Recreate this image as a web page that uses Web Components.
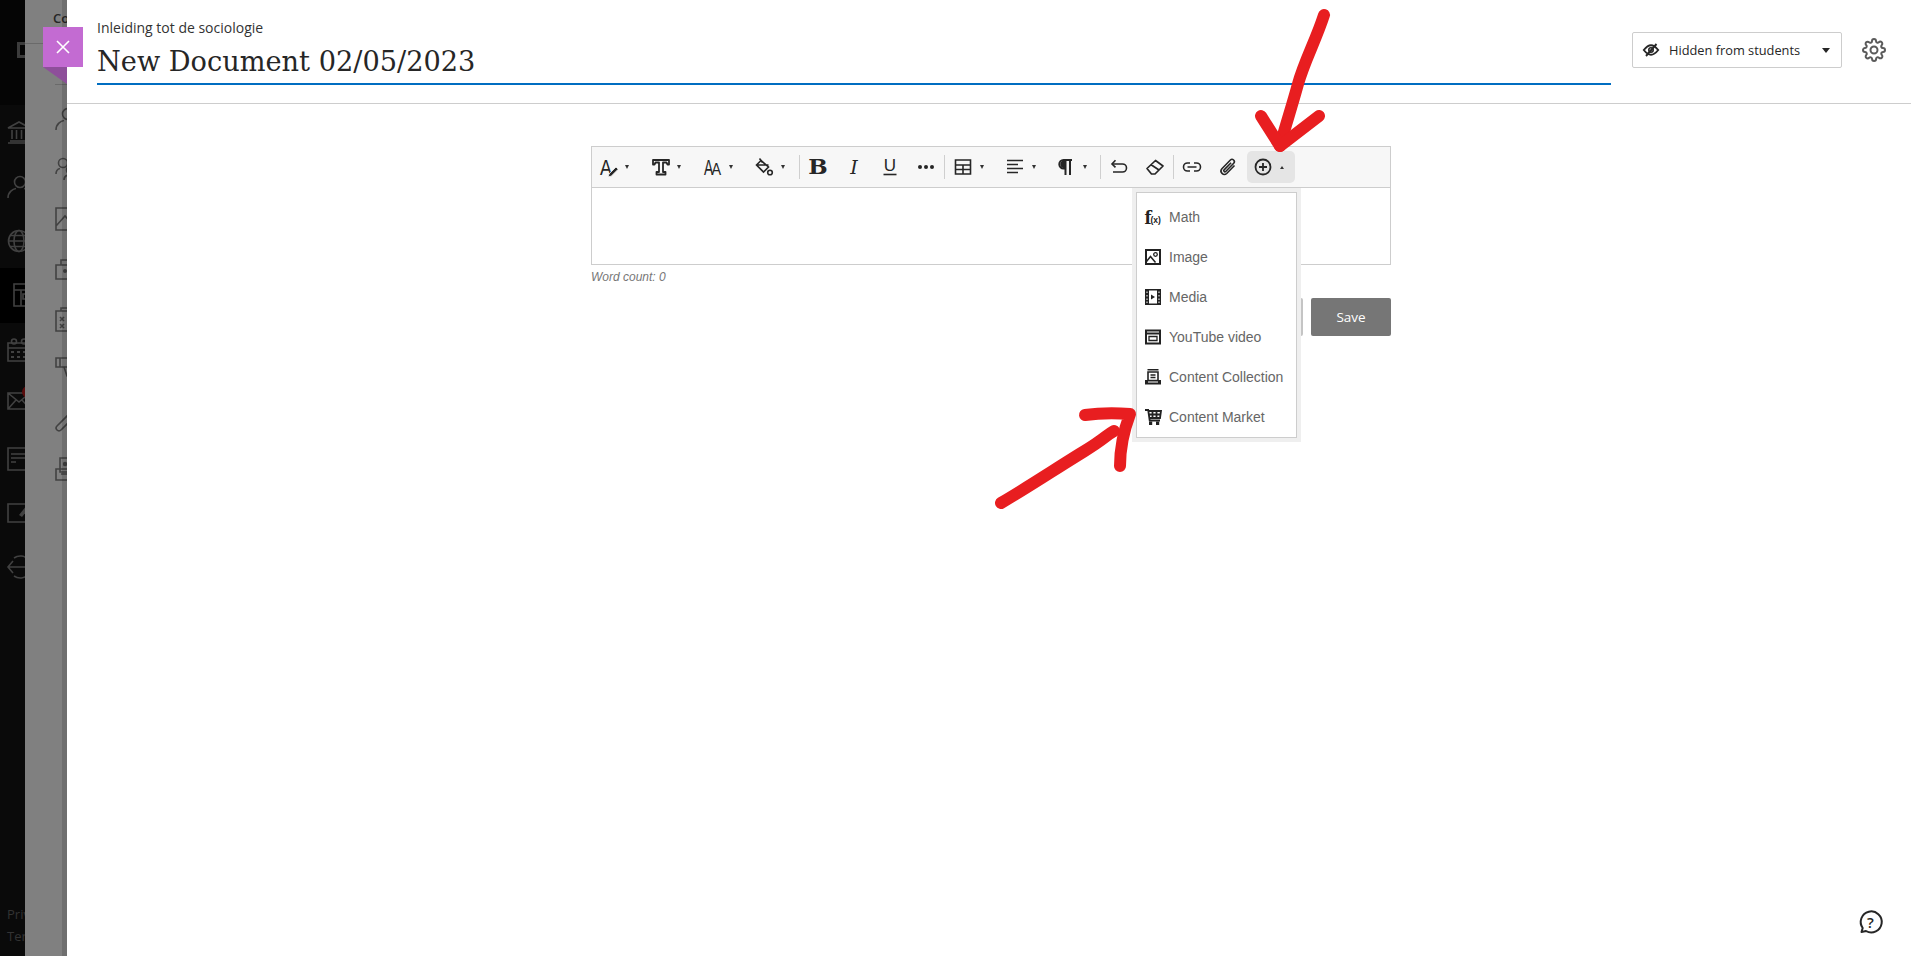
<!DOCTYPE html>
<html>
<head>
<meta charset="utf-8">
<title>New Document</title>
<style>
  html, body { margin: 0; height: 100%; overflow: hidden; background: #fff; }
</style>
</head>
<body>
<bb-app>
  <dim-rail slot="rail"></dim-rail>
  <dim-coursenav slot="nav"></dim-coursenav>
  <doc-panel slot="panel">
    <doc-header course="Inleiding tot de sociologie" title="New Document 02/05/2023"></doc-header>
    <rich-editor></rich-editor>
  </doc-panel>
</bb-app>

<script>
const line = 'fill="none" stroke="currentColor" stroke-width="1.6"';
const slab = 'font-family="DejaVu Serif"';
const ICONS = {
    // toolbar
    fontcolor: `<text transform="translate(2 18) scale(.8 1)" font-family="Liberation Sans" font-size="22" fill="currentColor">A</text><path d="M11 17l7-7 2.200 2.200-7 7-3 .6z" fill="currentColor" stroke="#f7f7f7" stroke-width=".8"/>`,
    fontfamily: `<path d="M3 3h16v4.500h-1.500l-1-2H13v9.500h2.500v2.500h-9V15H9V5.500H5.500l-1 2H3z" fill="#f7f7f7" stroke="currentColor" stroke-width="1.800" stroke-linejoin="round"/>`,
    fontsize: `<text transform="translate(2 18) scale(.62 1)" font-family="Liberation Sans" font-size="22" fill="currentColor">A</text><text transform="translate(9.500 18) scale(.85 1)" font-family="Liberation Sans" font-size="17" fill="currentColor">A</text>`,
    bucket: `<path d="M7 3.500l7.500 6.500-5 5-7-7z M2.500 8h12" ${line}/><path d="M5.500 1.500l3 4" ${line}/><circle cx="16" cy="15.500" r="2.300" ${line}/>`,
    bold: `<text transform="translate(10 16.500) scale(1.150 1)" text-anchor="middle" ${slab} font-weight="700" font-size="20" fill="currentColor">B</text>`,
    italic: `<text x="10" y="16.500" text-anchor="middle" ${slab} font-style="italic" font-size="19" fill="currentColor">I</text>`,
    underline: `<text x="10" y="14" text-anchor="middle" font-family="Liberation Sans" font-size="17" fill="currentColor">U</text><path d="M3.500 17.500h13" ${line}/>`,
    dots: `<circle cx="4" cy="10" r="2" fill="currentColor"/><circle cx="10" cy="10" r="2" fill="currentColor"/><circle cx="16" cy="10" r="2" fill="currentColor"/>`,
    table: `<path d="M2.500 3h15v14h-15z M2.500 8h15 M2.500 12.500h15 M10 8v9" ${line}/>`,
    align: `<path d="M2 3.500h16 M2 7.500h11 M2 11.500h16 M2 15.500h11" ${line}/>`,
    para: `<path d="M16 3H7.500a4.200 4.200 0 0 0 0 8.400H9 M9.500 3v15 M14 3v15" fill="none" stroke="currentColor" stroke-width="2"/><path d="M9 3.500v7.500H7.500a3.800 3.800 0 0 1 0-7.500z" fill="currentColor"/>`,
    undo: `<path d="M3 7h10.500a3.800 3.800 0 0 1 0 8H4" ${line}/><path d="M6.500 3.200L3 7l3.500 3.400" ${line}/>`,
    eraser: `<path d="M2 11.500l8.500-8 7.500 5.500-8 8H6.500z M6.500 8l7.500 5" fill="none" stroke="currentColor" stroke-width="1.700" stroke-linejoin="round"/>`,
    link: `<path d="M8 6H5.500a4 4 0 0 0 0 8H8 M12 6h2.500a4 4 0 0 1 0 8H12 M5.500 10h9" ${line}/>`,
    clip: `<path d="M16.500 8.500l-7.800 8a3.400 3.400 0 0 1-4.800-4.800l8.500-8.700a2.300 2.300 0 0 1 3.300 3.200l-8 8.300a1.100 1.100 0 0 1-1.600-1.600l7-7.200" ${line}/>`,
    plus: `<circle cx="10" cy="10" r="7.500" fill="none" stroke="currentColor" stroke-width="1.800"/><path d="M10 6v8 M6 10h8" fill="none" stroke="currentColor" stroke-width="1.800"/>`,
    // insert menu
    math: `<text transform="translate(-.5 14.500) scale(.85 1)" ${slab} font-weight="700" font-size="19" fill="currentColor">f</text><text x="5.500" y="13.500" font-family="Liberation Sans" font-weight="700" font-size="8.500" fill="currentColor">(x)</text>`,
    image: `<path d="M1 1h14v14H1z" fill="none" stroke="currentColor" stroke-width="2"/><path d="M1.500 12.500l4-5 5 6" fill="none" stroke="currentColor" stroke-width="1.500"/><circle cx="10.500" cy="5.500" r="1.800" fill="none" stroke="currentColor" stroke-width="1.300"/>`,
    media: `<path d="M0 0h16v16H0z" fill="currentColor"/><path d="M4 1.500h8v13H4z" fill="#fff"/><path d="M1.500 2.500h1v1.500h-1z M1.500 6h1v1.500h-1z M1.500 9.500h1v1.500h-1z M1.500 12.500h1v1.500h-1z M13.500 2.500h1v1.500h-1z M13.500 6h1v1.500h-1z M13.500 9.500h1v1.500h-1z M13.500 12.500h1v1.500h-1z" fill="#fff"/><path d="M6 5.500l4 2.500-4 2.500z" fill="currentColor"/>`,
    video: `<path d="M1 1.500h14v13H1z M1 4.500h14" fill="none" stroke="currentColor" stroke-width="2"/><path d="M4 7.500h8v4H4z" fill="none" stroke="currentColor" stroke-width="1.300"/>`,
    collection: `<path d="M2.500 .800h11 M3 3h10v8.500H3z M5.500 6h5 M5.500 8.500h5" fill="none" stroke="currentColor" stroke-width="1.600"/><path d="M0 11h16v4.500H0z" fill="currentColor"/><path d="M3 13h10" stroke="#fff" stroke-width="1"/>`,
    market: `<path d="M0 1h3.200l1.500 10.500h10.300 M3.500 2h12.500l-1 7H4.500 M7.500 2v7 M11.500 2v7 M3.800 5.500h11.700" fill="none" stroke="currentColor" stroke-width="1.800"/><path d="M4 12.500h3.200v3.500H4z M11 12.500h3.200v3.500H11z" fill="currentColor"/>`,
    // header
    hidden: `<path d="M.8 8c3-3.800 5-4.800 7.200-4.800s4.200 1 7.200 4.800c-3 3.800-5 4.800-7.200 4.800S3.800 11.800.8 8z" fill="none" stroke="currentColor" stroke-width="1.900"/><circle cx="8" cy="8" r="2.200" fill="none" stroke="currentColor" stroke-width="1.600"/><path d="M3 14L13.500 2" stroke="currentColor" stroke-width="1.900"/>`,
    gear: `<circle cx="12" cy="12" r="3.500" fill="none" stroke="currentColor" stroke-width="2"/><path d="M19.400 15a1.650 1.650 0 0 0 .33 1.820l.06.06a2 2 0 0 1 0 2.830 2 2 0 0 1-2.830 0l-.06-.06a1.650 1.650 0 0 0-1.820-.33 1.650 1.650 0 0 0-1 1.510V21a2 2 0 0 1-2 2 2 2 0 0 1-2-2v-.09A1.650 1.650 0 0 0 9 19.400a1.650 1.650 0 0 0-1.820.33l-.06.06a2 2 0 0 1-2.830 0 2 2 0 0 1 0-2.830l.06-.06a1.650 1.650 0 0 0 .33-1.820 1.650 1.650 0 0 0-1.510-1H3a2 2 0 0 1-2-2 2 2 0 0 1 2-2h.09A1.650 1.650 0 0 0 4.600 9a1.650 1.650 0 0 0-.33-1.820l-.06-.06a2 2 0 0 1 0-2.830 2 2 0 0 1 2.830 0l.06.06a1.650 1.650 0 0 0 1.820.33H9a1.650 1.650 0 0 0 1-1.510V3a2 2 0 0 1 2-2 2 2 0 0 1 2 2v.09a1.650 1.650 0 0 0 1 1.510 1.650 1.650 0 0 0 1.820-.33l.06-.06a2 2 0 0 1 2.830 0 2 2 0 0 1 0 2.830l-.06.06a1.650 1.650 0 0 0-.33 1.820V9a1.650 1.650 0 0 0 1.510 1H21a2 2 0 0 1 2 2 2 2 0 0 1-2 2h-.09a1.650 1.650 0 0 0-1.510 1z" fill="none" stroke="currentColor" stroke-width="2"/>`,
    help: `<path d="M3.500 22l1.200-4A10.500 10.500 0 1 1 8 21z" fill="none" stroke="currentColor" stroke-width="2" stroke-linejoin="round"/><text x="12.500" y="17.500" text-anchor="middle" font-family="Open Sans" font-weight="600" font-size="15" fill="currentColor">?</text>`,
    close: `<path d="M2 2l12 12 M14 2L2 14" fill="none" stroke="currentColor" stroke-width="1.600"/>`,
    // dimmed navigation behind the panel
    bank: `<path d="M1 8L12 2l11 6z M3 21h18 M1 23h22 M5 10v9 M9.500 10v9 M14.500 10v9 M19 10v9" ${line}/>`,
    user: `<circle cx="13" cy="7" r="5.500" ${line}/><path d="M1 23c0-6 5-9 8-9.500 M17 13.500c3 .5 6 3.500 6 9.500" ${line}/>`,
    globe: `<circle cx="12" cy="12" r="10.500" ${line}/><path d="M1.500 12h21 M3 6.500h18 M3 17.500h18" ${line}/><ellipse cx="12" cy="12" rx="5" ry="10.500" ${line}/>`,
    course: `<path d="M1 1h20v22H1z M1 7h20 M8 7v16" ${line}/><path d="M10 11h8v5h-8z" ${line}/>`,
    calendar: `<path d="M1 5h22v18H1z M1 10h22" ${line}/><circle cx="7" cy="3.500" r="2.500" ${line}/><circle cx="17" cy="3.500" r="2.500" ${line}/><path d="M4 13h3v2H4z M10 13h3v2h-3z M16 13h3v2h-3z M4 18h3v2H4z M10 18h3v2h-3z M16 18h3v2h-3z" fill="currentColor"/>`,
    mail: `<path d="M1 1h22v16H1z M1 1l11 9 11-9 M1 17l8-9 M23 17l-8-9" ${line}/>`,
    grades: `<path d="M1 1h20v22H1z M4 7h14 M4 11h14 M4 15h5" ${line}/>`,
    note: `<path d="M1 3h22v18H1z" ${line}/><path d="M12 14l8-10 3 2-8 10z" fill="currentColor"/>`,
    signout: `<path d="M1 12h17 M6 6l-5 6 5 6" ${line}/><path d="M7 3a11 11 0 1 1 0 18" ${line}/>`,
    people: `<circle cx="8" cy="6" r="4.500" ${line}/><circle cx="16" cy="13" r="4.500" ${line}/><path d="M1 17c0-3 2-5 4-5.500 M9 23c0-3 2-4.500 4-5" ${line}/>`,
    picture: `<path d="M1 1h22v22H1z M1 19l9-10 9 10" ${line}/>`,
    lock: `<path d="M1 8h22v14H1z M6 8V3h12v5" ${line}/><circle cx="10" cy="14" r="2" fill="currentColor"/>`,
    clipboard: `<path d="M1 4h22v20H1z M6 4V1h10v3" ${line}/><path d="M5 10l4 4 M9 10l-4 4 M5 17l4 4 M9 17l-4 4" ${line}/>`,
    flag: `<path d="M1 1h24v9H1z M5 1v9" ${line}/><path d="M9 10l3 9h9" ${line}/>`,
    wrench: `<path d="M2 19l16-16 4 4L6 23a2.800 2.800 0 0 1-4-4z" ${line}/>`,
    case: `<path d="M5 1h18v14H5z" ${line}/><circle cx="10" cy="7" r="2.200" fill="currentColor"/><path d="M1 12h22v11H1z M6 17h8" ${line}/>`
};

function icon(name, width, height) {
    const box = ICONS[name];
    const size = width || 20;
    const base = { fontcolor: 20, fontfamily: 20, fontsize: 20, bucket: 20, bold: 20, italic: 20, underline: 20, dots: 20, table: 20, align: 20, para: 20, undo: 20, eraser: 20, link: 20, clip: 20, plus: 20, math: 16, image: 16, media: 16, video: 16, collection: 16, market: 16, hidden: 16, close: 16 }[name] || 24;
    return `<svg width="${size}" height="${height || size}" viewBox="0 0 ${base} ${base}" style="flex:none;overflow:visible" aria-hidden="true">${box}</svg>`;
}

class BbApp extends HTMLElement {
    constructor() {
        super();
        this.attachShadow({ mode: "open" });
        this.shadowRoot.innerHTML = `<style>
            :host { display: flex; position: relative; height: 100vh; overflow: hidden; }
            ::slotted([slot="panel"]) { flex: 1; min-width: 0; }
            .marks { position: absolute; left: 0; top: 0; pointer-events: none; }
            .marks path { fill: none; stroke: #e81e20; stroke-width: 12; stroke-linecap: round; stroke-linejoin: round; }
        </style>
        <slot name="rail"></slot>
        <slot name="nav"></slot>
        <slot name="panel"></slot>
        <svg class="marks" width="1911" height="956" aria-hidden="true">
            <path d="M1324 15C1316 40 1304 62 1298 84S1286 124 1280 146"/>
            <path d="M1261 116L1280 146 1319 116"/>
            <path d="M1001 503C1030 486 1060 466 1083 452S1105 436 1114 431"/>
            <path d="M1085 415C1100 413 1115 413 1130 414 1124 430 1120 450 1120 466"/>
        </svg>`;
    }
}

class DimRail extends HTMLElement {
    constructor() {
        super();
        this.attachShadow({ mode: "open" });
        const rows = ["bank", "user", "globe", "course", "calendar", "mail", "grades", "note", "signout"];
        this.shadowRoot.innerHTML = `<style>
            :host { display: flex; flex-direction: column; flex: none; width: 25px; overflow: hidden; background: #0a0a0a; color: #414141; font: 13px "Open Sans", sans-serif; position: relative; }
            .logo { height: 105px; box-sizing: border-box; padding: 42px 0 0 17px; background: #050505; }
            .logo i { display: block; width: 14px; height: 16px; border: 3px solid #3c3c3c; box-sizing: border-box; }
            .row { height: 54.4px; flex: none; display: flex; align-items: center; padding-left: 7px; }
            .row.active { background: #000; padding-left: 13px; }
            .badge { position: absolute; left: 22px; top: 386px; width: 12px; height: 12px; border-radius: 50%; background: #5a0c0c; }
            .foot { margin-top: auto; padding: 0 0 9px 7px; white-space: nowrap; line-height: 22px; color: #333; }
        </style>
        <div class="logo"><i></i></div>
        ${rows.map(r => `<div class="row ${r === "course" ? "active" : ""}">${icon(r, 24)}</div>`).join("")}
        <span class="badge"></span>
        <div class="foot">Priv<br>Ter</div>`;
    }
}

class DimCoursenav extends HTMLElement {
    constructor() {
        super();
        this.attachShadow({ mode: "open" });
        const rows = ["user", "people", "picture", "lock", "clipboard", "flag", "wrench", "case"];
        this.shadowRoot.innerHTML = `<style>
            :host { display: block; flex: none; width: 42px; overflow: hidden; background: #808080; color: #424242; font: 600 13px "Open Sans", sans-serif; position: relative; }
            :host::after { content: ""; position: absolute; right: 0; top: 0; bottom: 0; width: 5px; background: rgba(0,0,0,.13); }
            .name { padding: 9px 0 0 28px; height: 43px; box-sizing: border-box; color: #262626; white-space: nowrap; }
            .rule { height: 1px; background: #6a6a6a; width: 18px; }
            .rule.low { width: 20px; margin: 40px 0 0 30px; }
            .row { height: 50px; display: flex; align-items: center; padding-left: 30px; }
            .rows { padding-top: 9px; }
        </style>
        <div class="name">Co</div>
        <div class="rule"></div>
        <div class="rule low"></div>
        <div class="rows">${rows.map(r => `<div class="row">${icon(r, 24)}</div>`).join("")}</div>`;
    }
}

class DocPanel extends HTMLElement {
    constructor() {
        super();
        this.attachShadow({ mode: "open" });
        this.shadowRoot.innerHTML = `<style>
            :host { display: flex; flex-direction: column; position: relative; background: #fff; }
            .close { position: absolute; left: -24px; top: 27px; width: 40px; height: 40px; background: #c36bd2; color: #fff; display: flex; align-items: center; justify-content: center; }
            .close::after { content: ""; position: absolute; left: 0; top: 40px; border-top: 17px solid #8e4f9a; border-left: 24px solid transparent; }
            .help { position: absolute; right: 29px; bottom: 22px; color: #262626; display: flex; }
        </style>
        <span class="close">${icon("close", 16)}</span>
        <slot></slot>
        <span class="help">${icon("help", 24)}</span>`;
    }
}

class DocHeader extends HTMLElement {
    constructor() {
        super();
        this.attachShadow({ mode: "open" });
        this.shadowRoot.innerHTML = `<style>
            :host { display: flex; flex: none; height: 103px; border-bottom: 1px solid #cdcdcd; box-sizing: content-box; font-family: "Open Sans", sans-serif; color: #262626; }
            .titles { width: 1514px; margin-left: 30px; height: 85px; box-sizing: border-box; padding-top: 19px; border-bottom: 2px solid #006dc1; }
            .course { font-size: 14px; line-height: 18px; color: #333; }
            h1 { margin: 6px 0 0; font: 400 27.2px/38px "DejaVu Serif", serif; color: #262626; white-space: nowrap; }
            .visibility { display: flex; align-items: center; margin: 32px 0 0 21px; width: 210px; height: 36px; box-sizing: border-box; border: 1px solid #cdcdcd; border-radius: 2px; padding: 0 10px; font-size: 12.8px; color: #262626; white-space: nowrap; }
            .visibility svg { flex: none; margin-right: 10px; }
            .caret { margin-left: 22px; border: 4px solid transparent; border-top: 5px solid #262626; border-bottom: 0; }
            .gear { margin: 38px 0 0 20px; color: #5a5a5a; display: flex; height: 24px; }
        </style>
        <div class="titles">
            <div class="course"></div>
            <h1></h1>
        </div>
        <div class="visibility">${icon("hidden", 16)}<span>Hidden from students</span><i class="caret"></i></div>
        <span class="gear">${icon("gear", 24)}</span>`;
    }

    connectedCallback() {
        this.shadowRoot.querySelector(".course").textContent = this.getAttribute("course");
        this.shadowRoot.querySelector("h1").textContent = this.getAttribute("title");
    }
}

class RichEditor extends HTMLElement {
    constructor() {
        super();
        this.attachShadow({ mode: "open" });
        this.shadowRoot.innerHTML = `<style>
            :host { display: block; position: relative; width: 800px; margin: 42px 0 0 524px; font-family: "Liberation Sans", sans-serif; }
            .box { border: 1px solid #cdcdcd; }
            .area { height: 76px; background: #fff; }
            .count { font-style: italic; font-size: 12px; line-height: 14px; margin-top: 5px; color: #777; }
            .actions { display: flex; justify-content: flex-end; gap: 8px; margin-top: 14px; }
            .actions span { display: flex; align-items: center; justify-content: center; width: 80px; height: 38px; border-radius: 2px; font: 500 13.5px "Open Sans", sans-serif; }
            .cancel { background: #c4c4c4; }
            .save { background: #767676; color: #fff; }
            insert-menu { position: absolute; left: 541px; top: 42px; }
        </style>
        <div class="box">
            <editor-toolbar></editor-toolbar>
            <div class="area"></div>
        </div>
        <div class="count">Word count: 0</div>
        <div class="actions"><span class="cancel" aria-label="Cancel"></span><span class="save">Save</span></div>
        <insert-menu></insert-menu>`;
    }
}

class EditorToolbar extends HTMLElement {
    constructor() {
        super();
        this.attachShadow({ mode: "open" });
        // name, has a dropdown caret, left margin
        const tools = [
            ["fontcolor", 1, 0], ["fontfamily", 1, 2], ["fontsize", 1, 2], ["bucket", 1, 2], "|1",
            ["bold", 0, 2], ["italic", 0, 2], ["underline", 0, 2], ["dots", 0, 2], "|0",
            ["table", 1, 2], ["align", 1, 2], ["para", 1, 1], "|0",
            ["undo", 0, 2], ["eraser", 0, 2], "|0",
            ["link", 0, 2], ["clip", 0, 2], ["plus", 2, 1]
        ];
        const html = tools.map(t => {
            if (typeof t === "string") return `<i class="sep" style="margin-left:${t[1]}px"></i>`;
            const [name, caret, left] = t;
            const cls = caret === 2 ? "btn drop open" : caret ? "btn drop" : "btn";
            return `<span class="${cls}" style="margin-left:${left}px">${icon(name, 20)}${caret ? `<b></b>` : ""}</span>`;
        }).join("");
        this.shadowRoot.innerHTML = `<style>
            :host { display: flex; align-items: center; height: 40px; background: #f7f7f7; border-bottom: 1px solid #cdcdcd; color: #262626; }
            .btn { display: flex; align-items: center; width: 32px; height: 32px; margin-right: 2px; padding-left: 6px; box-sizing: border-box; border-radius: 5px; flex: none; }
            .drop { width: 48px; }
            .drop b { margin-left: 7px; border: 2.5px solid transparent; border-top: 4px solid #333; border-bottom: 0; }
            .open { background: #e5e5e5; }
            .open b { border-top: 0; border-bottom: 3px solid #333; }
            .sep { width: 1px; height: 24px; background: #cfcfcf; flex: none; }
        </style>${html}`;
    }
}

class InsertMenu extends HTMLElement {
    constructor() {
        super();
        this.attachShadow({ mode: "open" });
        const items = [["math", "Math"], ["image", "Image"], ["media", "Media"], ["video", "YouTube video"], ["collection", "Content Collection"], ["market", "Content Market"]];
        this.shadowRoot.innerHTML = `<style>
            :host { display: block; width: 169px; box-sizing: border-box; border: 4px solid #efefef; background: #fff; }
            ul { list-style: none; margin: 0; padding: 4px 0 0; border: 1px solid #cdcdcd; }
            li { display: flex; align-items: center; height: 40px; padding-left: 8px; font: 14px "Liberation Sans", sans-serif; color: #666; white-space: nowrap; }
            svg { color: #222; margin-right: 8px; flex: none; }
        </style>
        <ul>${items.map(i => `<li>${icon(i[0], 16)}<span>${i[1]}</span></li>`).join("")}</ul>`;
    }
}

customElements.define("bb-app", BbApp);
customElements.define("dim-rail", DimRail);
customElements.define("dim-coursenav", DimCoursenav);
customElements.define("doc-panel", DocPanel);
customElements.define("doc-header", DocHeader);
customElements.define("rich-editor", RichEditor);
customElements.define("editor-toolbar", EditorToolbar);
customElements.define("insert-menu", InsertMenu);
</script>
</body>
</html>
